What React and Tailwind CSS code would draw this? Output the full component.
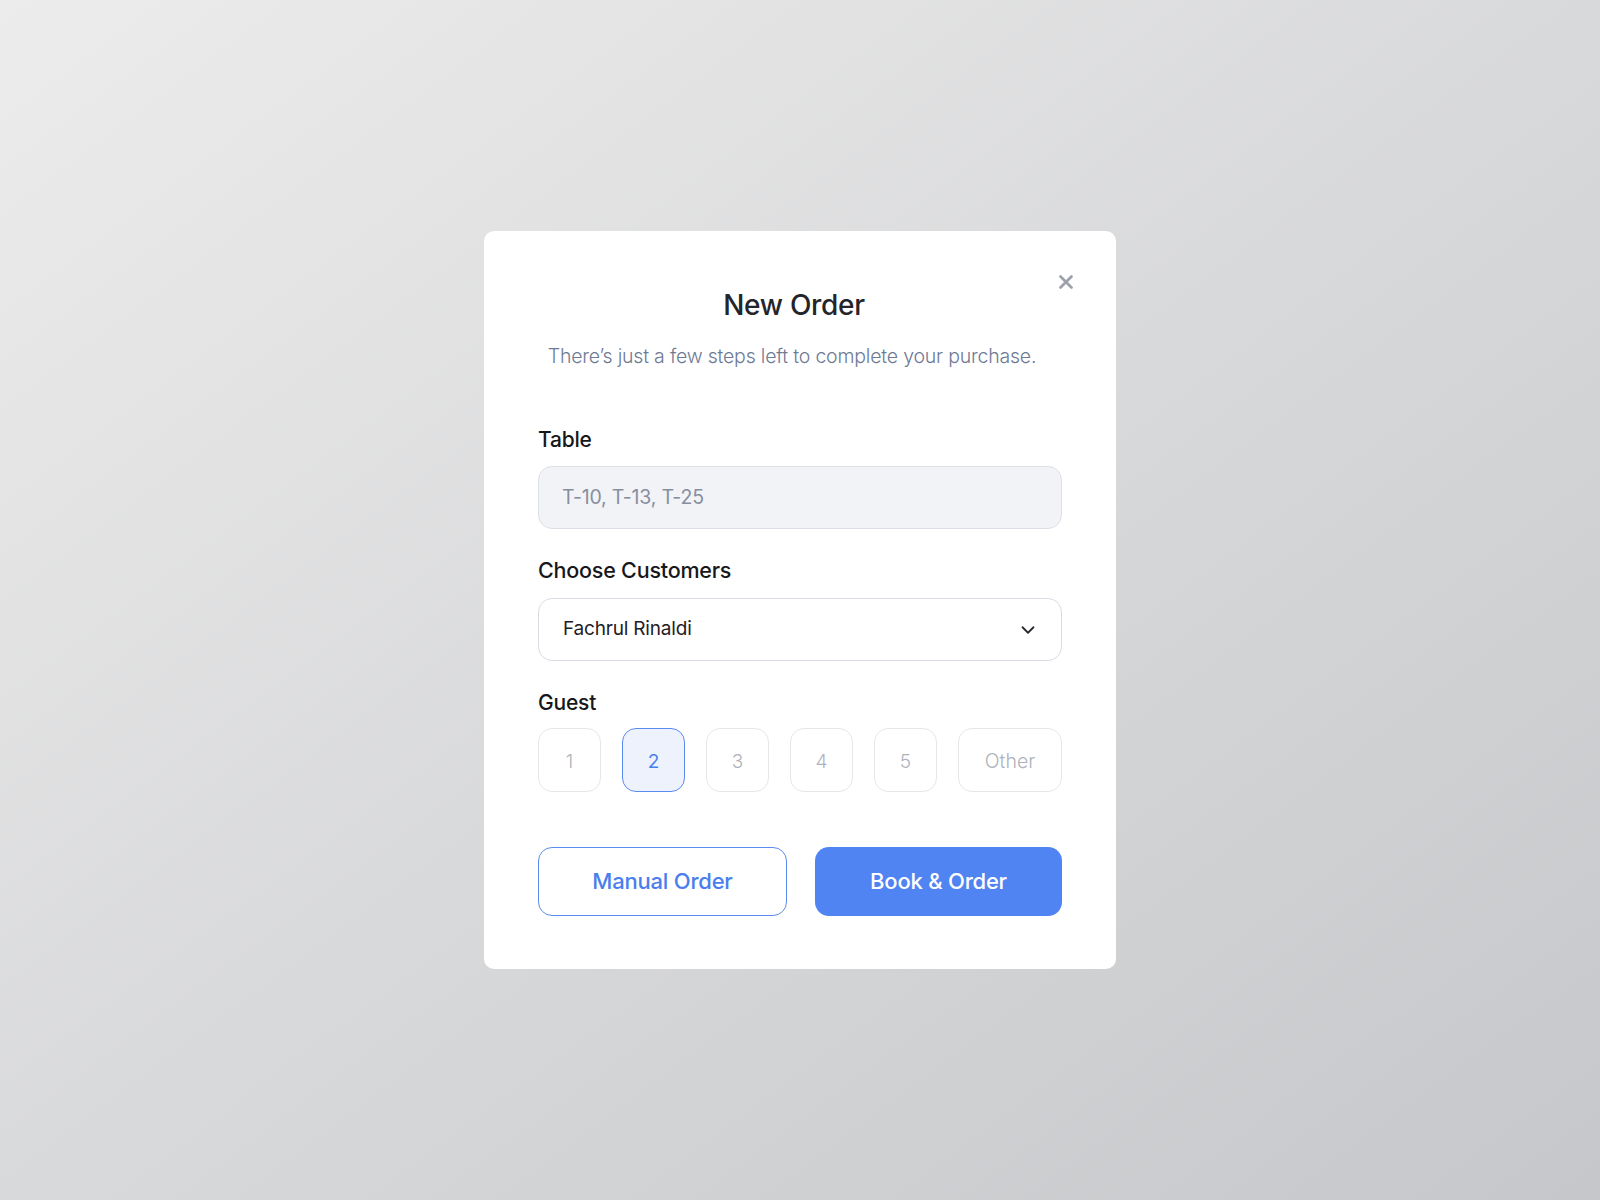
import { useState } from 'react';
import { ChevronDown, X } from 'lucide-react';

const guests = ['1', '2', '3', '4', '5'];

export default function App() {
  const [guest, setGuest] = useState('2');

  return (
    <div
      className="min-h-screen w-full flex items-center justify-center bg-linear-to-br from-[#ececec] to-[#c6c7ca]"
      style={{ fontFamily: 'Inter, "Noto Sans", sans-serif' }}
    >
      <div className="relative w-[632px] h-[738px] bg-white rounded-[10px] px-[54px] pt-[58px]">
        <button className="absolute right-[39px] top-[40px] text-[#9ca1ab]">
          <X size={22} strokeWidth={3} />
        </button>

        {/* Header */}
        <div className="flex flex-col items-center">
          <h1 className="text-[28px] leading-[32px] font-medium text-[#24252b] tracking-[-0.01em] -ml-3">New Order</h1>
          <p className="mt-[23px] text-[19.5px] leading-[24px] font-light text-[#6e7a94] tracking-[-0.01em] -ml-4">
            There’s just a few steps left to complete your purchase.
          </p>
        </div>

        {/* Table */}
        <div className="mt-[59px]">
          <label className="block text-[21px] leading-[26px] font-medium text-[#16171b] tracking-[-0.01em]">Table</label>
          <div className="mt-[13px] h-[63px] rounded-[14px] bg-[#f2f3f7] border border-[#dcdfe6] flex items-center px-[23px]">
            <span className="text-[19.5px] text-[#878ea0] font-normal tracking-[-0.01em]">T-10, T-13, T-25</span>
          </div>
        </div>

        {/* Customers */}
        <div className="mt-[28px]">
          <label className="block text-[21.5px] leading-[26px] font-medium text-[#16171b] tracking-[-0.01em]">Choose Customers</label>
          <div className="mt-[15px] h-[63px] rounded-[14px] bg-white border border-[#d9dce2] flex items-center justify-between pl-[24px] pr-[22px]">
            <span className="text-[19px] text-[#1f2026] tracking-[-0.01em]">Fachrul Rinaldi</span>
            <ChevronDown size={22} strokeWidth={2} className="text-[#2a2b31]" />
          </div>
        </div>

        {/* Guest */}
        <div className="mt-[29px]">
          <label className="block text-[21px] leading-[26px] font-medium text-[#16171b] tracking-[-0.01em]">Guest</label>
          <div className="mt-[12px] flex gap-[21px]">
            {guests.map((g) => (
              <button
                key={g}
                onClick={() => setGuest(g)}
                className={
                  guest === g
                    ? 'w-[63px] h-[64px] pt-[4px] rounded-[14px] border-[1.5px] border-[#5a8bf1] bg-[#edf2fd] text-[19px] text-[#4a7eee]'
                    : 'w-[63px] h-[64px] pt-[4px] rounded-[14px] border border-[#e6e7eb] bg-white text-[19px] font-light text-[#aeb2bb]'
                }
              >
                {g}
              </button>
            ))}
            <button className="flex-1 h-[64px] pt-[4px] rounded-[14px] border border-[#e6e7eb] bg-white text-[19.5px] leading-none font-light text-[#aeb2bb]">
              Other
            </button>
          </div>
        </div>

        {/* Actions */}
        <div className="mt-[55px] flex gap-[28px]">
          <button className="flex-1 h-[69px] rounded-[14px] border-[1.5px] border-[#5a8bf1] bg-white text-[22px] font-medium text-[#4a7eee] tracking-[-0.01em]">
            Manual Order
          </button>
          <button className="flex-1 h-[69px] rounded-[14px] bg-[#4f84f2] text-[22px] font-medium text-white tracking-[-0.01em]">
            Book &amp; Order
          </button>
        </div>
      </div>
    </div>
  );
}
